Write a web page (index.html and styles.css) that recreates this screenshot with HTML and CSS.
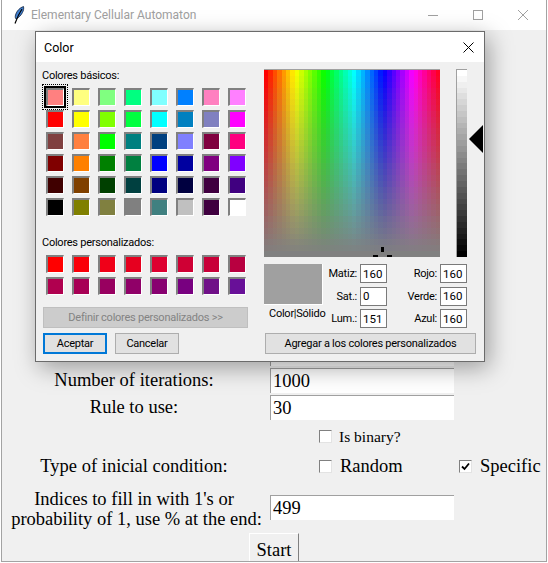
FILE: index.html
```html
<!DOCTYPE html>
<html lang="es">
<head>
    <meta charset="UTF-8">
    <meta name="viewport" content="width=device-width, initial-scale=1.0">
    <title>Elementary Cellular Automaton</title>
    <link rel="stylesheet" href="styles.css">
</head>
<body>
    <div class="window">
        <div class="titlebar">
            <svg class="feather" width="12" height="18" viewBox="0 0 12 18">
                <path d="M10.5 .5C7 1.5 3.5 5 2.5 9c-.4 1.6-.3 3 .3 3.8C5.500 12 8 9.500 9.500 6.500 10.500 4.500 11 2.500 10.500 .5z" fill="#3f7fd0" stroke="#12233d" stroke-width=".8"/>
                <path d="M9 3C7 6 4.500 10.500 2 17.500" fill="none" stroke="#000" stroke-width="1.200"/>
            </svg>
            <span class="app-title">Elementary Cellular Automaton</span>
            <div class="win-controls">
                <svg width="10" height="10" viewBox="0 0 10 10"><path d="M0 5.500H10" stroke="#a0a0a0"/></svg>
                <svg width="10" height="10" viewBox="0 0 10 10"><rect x=".5" y=".5" width="9" height="9" fill="none" stroke="#a0a0a0"/></svg>
                <svg width="10" height="10" viewBox="0 0 10 10"><path d="M0 0L10 10M10 0L0 10" stroke="#a0a0a0"/></svg>
            </div>
        </div>

        <form class="form">
            <div class="row-label covered"></div>
            <input class="field" type="text">
            <span></span>

            <label class="row-label">Number of iterations:</label>
            <input class="field" type="text" value="1000">
            <span></span>

            <label class="row-label">Rule to use:</label>
            <input class="field" type="text" value="30">
            <span></span>

            <span></span>
            <div class="check small"><span class="box"></span>Is binary?</div>
            <span></span>

            <label class="row-label type-label">Type of inicial condition:</label>
            <div class="check"><span class="box"></span>Random</div>
            <div class="check right"><span class="box on"><svg width="9" height="9" viewBox="0 0 9 9"><path d="M1 4.500L3.500 7 8 1.500" fill="none" stroke="#000" stroke-width="1.800"/></svg></span>Specific</div>

            <label class="row-label two-lines">Indices to fill in with 1's or<br><span class="nudge">probability of 1, use % at the end:</span></label>
            <input class="field indices" type="text" value="499">
            <span></span>

            <span></span>
            <div class="start-cell"><button type="button" class="start">Start</button></div>
            <span></span>
        </form>

        <div class="dialog">
            <div class="dialog-title">
                <span>Color</span>
                <svg width="11" height="11" viewBox="0 0 11 11"><path d="M.5 .5L10.500 10.500M10.500 .5L.5 10.500" stroke="#000" stroke-width="1"/></svg>
            </div>
            <div class="dialog-body">
                <div class="left-col">
                    <div class="sw-label">Colores básicos:</div>
                    <div class="swatches">
                        <span class="sw picked c-ff8080"></span><span class="sw c-ffff80"></span><span class="sw c-80ff80"></span><span class="sw c-00ff80"></span><span class="sw c-80ffff"></span><span class="sw c-0080ff"></span><span class="sw c-ff80c0"></span><span class="sw c-ff80ff"></span>
                        <span class="sw c-ff0000"></span><span class="sw c-ffff00"></span><span class="sw c-80ff00"></span><span class="sw c-00ff40"></span><span class="sw c-00ffff"></span><span class="sw c-0080c0"></span><span class="sw c-8080c0"></span><span class="sw c-ff00ff"></span>
                        <span class="sw c-804040"></span><span class="sw c-ff8040"></span><span class="sw c-00ff00"></span><span class="sw c-008080"></span><span class="sw c-004080"></span><span class="sw c-8080ff"></span><span class="sw c-800040"></span><span class="sw c-ff0080"></span>
                        <span class="sw c-800000"></span><span class="sw c-ff8000"></span><span class="sw c-008000"></span><span class="sw c-008040"></span><span class="sw c-0000ff"></span><span class="sw c-0000a0"></span><span class="sw c-800080"></span><span class="sw c-8000ff"></span>
                        <span class="sw c-400000"></span><span class="sw c-804000"></span><span class="sw c-004000"></span><span class="sw c-004040"></span><span class="sw c-000080"></span><span class="sw c-000040"></span><span class="sw c-400040"></span><span class="sw c-400080"></span>
                        <span class="sw c-000000"></span><span class="sw c-808000"></span><span class="sw c-808040"></span><span class="sw c-808080"></span><span class="sw c-408080"></span><span class="sw c-c0c0c0"></span><span class="sw c-400040"></span><span class="sw c-ffffff"></span>
                    </div>
                    <div class="sw-label custom-label">Colores personalizados:</div>
                    <div class="swatches">
                        <span class="sw c-ff0000"></span><span class="sw c-fa0008"></span><span class="sw c-f00018"></span><span class="sw c-e6001f"></span><span class="sw c-de0030"></span><span class="sw c-cf0034"></span><span class="sw c-c80038"></span><span class="sw c-b80040"></span>
                        <span class="sw c-b0004f"></span><span class="sw c-a80055"></span><span class="sw c-980060"></span><span class="sw c-900068"></span><span class="sw c-880070"></span><span class="sw c-780080"></span><span class="sw c-701088"></span><span class="sw c-681098"></span>
                    </div>
                    <button type="button" class="btn wide" disabled>Definir colores personalizados &gt;&gt;</button>
                    <div class="btn-row">
                        <button type="button" class="btn default">Aceptar</button>
                        <button type="button" class="btn">Cancelar</button>
                    </div>
                </div>

                <div class="right-col">
                    <div class="pick-row">
                        <div class="spectrum">
                            <span class="cross-v"></span>
                            <span class="cross-l"></span>
                            <span class="cross-r"></span>
                        </div>
                        <div class="lum-bar"></div>
                        <div class="arrow"></div>
                    </div>
                    <div class="value-row">
                        <div class="solid-col">
                            <div class="solid"></div>
                            <div class="solid-label">Color|Sólido</div>
                        </div>
                        <div class="values">
                            <span class="v-label">Matiz:</span><input class="v-input" value="160"><span class="v-label">Rojo:</span><input class="v-input" value="160">
                            <span class="v-label">Sat.:</span><input class="v-input" value="0"><span class="v-label">Verde:</span><input class="v-input" value="160">
                            <span class="v-label">Lum.:</span><input class="v-input" value="151"><span class="v-label">Azul:</span><input class="v-input" value="160">
                        </div>
                    </div>
                    <button type="button" class="btn add">Agregar a los colores personalizados</button>
                </div>
            </div>
        </div>
    </div>
</body>
</html>
```

FILE: styles.css
```css
html, body {
    margin: 0;
    padding: 0;
    background: #fff;
    overflow: hidden;
}
.window {
    position: relative;
    box-sizing: border-box;
    width: 546px;
    height: 562px;
    margin-left: 1px;
    background: #f0f0f0;
    border: 1px solid #a3a3a3;
    border-top: none;
    overflow: hidden;
}

/* main window */
.titlebar {
    display: flex;
    align-items: center;
    height: 30px;
    padding-left: 11px;
    background: #fff;
    font-family: Roboto, sans-serif;
    font-size: 12px;
}
.feather {
    margin-right: 6px;
}
.app-title {
    color: #a0a0a0;
}
.win-controls {
    display: flex;
    gap: 35px;
    margin-left: auto;
    margin-right: 18px;
}
.form {
    display: grid;
    grid-template-columns: 262px 184px 1fr;
    column-gap: 5px;
    padding: 311px 0 0 1px;
    font-family: "Liberation Serif", serif;
    font-size: 18.5px;
    color: #000;
}
.row-label {
    display: flex;
    justify-content: center;
    align-items: center;
    box-sizing: border-box;
    height: 27px;
    padding-bottom: 2px;
}
.covered {
    position: relative;
}
/* tail of a letter showing under the dialog */
.covered::after {
    content: "";
    position: absolute;
    left: 102px;
    top: 19px;
    width: 5px;
    height: 2px;
    background: #222;
}
.type-label {
    padding-bottom: 0;
    margin-bottom: 2px;
}
.row-label.two-lines {
    display: block;
    height: auto;
    padding-bottom: 0;
    text-align: center;
    line-height: 20px;
    margin-top: 7px;
}
.nudge {
    padding-left: 5px;
}
.field {
    box-sizing: border-box;
    width: 184px;
    height: 25px;
    margin-bottom: 2px;
    padding: 0 0 0 2px;
    border: none;
    border-top: 1px solid #a0a0a0;
    border-left: 1px solid #a0a0a0;
    background: #fff;
    font: 18.5px "Liberation Serif", serif;
    color: #000;
    outline: none;
}
.field.indices {
    margin-top: 13px;
}
.check {
    display: flex;
    align-items: center;
    height: 27px;
    margin-bottom: 2px;
    padding-left: 49px;
    white-space: nowrap;
}
.check.small {
    height: 31px;
    margin-bottom: 0;
    padding-bottom: 2px;
    box-sizing: border-box;
    font-size: 15.5px;
}
.check.right {
    padding-left: 0;
}
.box {
    display: flex;
    align-items: center;
    justify-content: center;
    box-sizing: border-box;
    width: 13px;
    height: 13px;
    margin-right: 7px;
    background: #fff;
    border-top: 1px solid #808080;
    border-left: 1px solid #808080;
    border-right: 1px solid #e3e3e3;
    border-bottom: 1px solid #e3e3e3;
}
.check:not(.small) .box {
    margin-right: 8px;
}
.start-cell {
    margin-left: -21px;
    margin-top: 4px;
}
.start {
    box-sizing: border-box;
    width: 50px;
    height: 33px;
    padding: 0;
    background: #f0f0f0;
    border: none;
    border-top: 1px solid #fff;
    border-left: 1px solid #fff;
    border-right: 1px solid #808080;
    font: 18.5px "Liberation Serif", serif;
    color: #000;
}

/* color dialog */
.dialog {
    position: absolute;
    left: 33px;
    top: 31px;
    box-sizing: border-box;
    width: 450px;
    height: 331px;
    background: #f0f0f0;
    border: 1px solid #6b6b6b;
    box-shadow: 4px 6px 22px rgba(0,0,0,0.35);
    font-family: Roboto, sans-serif;
    font-size: 11px;
    letter-spacing: -.25px;
    color: #000;
}
.dialog-title {
    display: flex;
    justify-content: space-between;
    align-items: center;
    height: 30px;
    padding: 0 10px 0 8px;
    background: #fff;
    font-size: 12.5px;
    letter-spacing: 0;
}
.dialog-body {
    display: flex;
}
.left-col {
    box-sizing: border-box;
    width: 228px;
    padding: 7px 0 0 6px;
}
.sw-label {
    height: 14px;
    line-height: 14px;
}
.custom-label {
    margin-top: 20px;
}
.swatches {
    display: grid;
    grid-template-columns: repeat(8, 18px);
    grid-auto-rows: 18px;
    column-gap: 8px;
    row-gap: 4px;
    margin: 5px 0 0 4px;
}
.custom-label + .swatches {
    margin-top: 5px;
}
.sw {
    position: relative;
    box-sizing: border-box;
    border-top: 2px solid #808080;
    border-left: 2px solid #808080;
    border-right: 1px solid #fff;
    border-bottom: 1px solid #fff;
}
.sw.picked {
    outline: 2px solid #000;
    outline-offset: 0;
}
.sw.picked::after {
    content: "";
    position: absolute;
    left: -6px;
    top: -6px;
    right: -5px;
    bottom: -5px;
    border: 1px dotted #000;
}
.btn {
    box-sizing: border-box;
    height: 21px;
    padding: 0;
    background: #e1e1e1;
    border: 1px solid #adadad;
    font-family: Roboto, sans-serif;
    font-size: 11px;
    letter-spacing: -.25px;
    color: #000;
}
.btn.wide {
    display: block;
    width: 205px;
    margin: 12px 0 0 1px;
    background: #cccccc;
    border-color: #bfbfbf;
    color: #838383;
}
.btn-row {
    display: flex;
    gap: 8px;
    margin: 5px 0 0 1px;
}
.btn-row .btn {
    width: 64px;
}
.btn.default {
    border: 2px solid #0078d7;
}
.right-col {
    display: flex;
    flex-direction: column;
    padding-top: 7px;
}
.pick-row {
    display: flex;
    height: 188px;
}
.spectrum {
    position: relative;
    width: 176px;
    height: 188px;
    background:
        linear-gradient(to bottom,
            rgba(128,128,128,0) 0 3.125%, rgba(128,128,128,.03) 0 6.25%, rgba(128,128,128,.06) 0 9.375%, rgba(128,128,128,.1) 0 12.5%,
            rgba(128,128,128,.13) 0 15.625%, rgba(128,128,128,.16) 0 18.75%, rgba(128,128,128,.19) 0 21.875%, rgba(128,128,128,.23) 0 25%,
            rgba(128,128,128,.26) 0 28.125%, rgba(128,128,128,.29) 0 31.25%, rgba(128,128,128,.32) 0 34.375%, rgba(128,128,128,.35) 0 37.5%,
            rgba(128,128,128,.39) 0 40.625%, rgba(128,128,128,.42) 0 43.75%, rgba(128,128,128,.45) 0 46.875%, rgba(128,128,128,.48) 0 50%,
            rgba(128,128,128,.52) 0 53.125%, rgba(128,128,128,.55) 0 56.25%, rgba(128,128,128,.58) 0 59.375%, rgba(128,128,128,.61) 0 62.5%,
            rgba(128,128,128,.65) 0 65.625%, rgba(128,128,128,.68) 0 68.75%, rgba(128,128,128,.71) 0 71.875%, rgba(128,128,128,.74) 0 75%,
            rgba(128,128,128,.77) 0 78.125%, rgba(128,128,128,.81) 0 81.25%, rgba(128,128,128,.84) 0 84.375%, rgba(128,128,128,.87) 0 87.5%,
            rgba(128,128,128,.9) 0 90.625%, rgba(128,128,128,.94) 0 93.75%, rgba(128,128,128,.97) 0 96.875%, #808080 0 100%),
        linear-gradient(to right,
            #ff0000 0 2.5%, #ff2600 0 5%, #ff4d00 0 7.5%, #ff7300 0 10%, #ff9900 0 12.5%, #ffbf00 0 15%, #ffe600 0 17.5%,
            #f2ff00 0 20%, #ccff00 0 22.5%, #a6ff00 0 25%, #80ff00 0 27.5%, #59ff00 0 30%, #33ff00 0 32.5%, #0dff00 0 35%,
            #00ff1a 0 37.5%, #00ff40 0 40%, #00ff66 0 42.5%, #00ff8c 0 45%, #00ffb3 0 47.5%, #00ffd9 0 50%, #00ffff 0 52.5%,
            #00d9ff 0 55%, #00b3ff 0 57.5%, #008cff 0 60%, #0066ff 0 62.5%, #0040ff 0 65%, #001aff 0 67.5%,
            #0d00ff 0 70%, #3300ff 0 72.5%, #5900ff 0 75%, #8000ff 0 77.5%, #a600ff 0 80%, #cc00ff 0 82.5%, #f200ff 0 85%,
            #ff00e6 0 87.5%, #ff00bf 0 90%, #ff0099 0 92.5%, #ff0073 0 95%, #ff004d 0 97.5%, #ff0026 0 100%);
    border-top: 1px solid #a0a0a0;
    box-sizing: border-box;
}
.cross-v, .cross-l, .cross-r {
    position: absolute;
    background: #000;
}
.cross-v {
    left: 117px;
    top: 177px;
    width: 3px;
    height: 5px;
}
.cross-l {
    left: 109px;
    top: 185px;
    width: 5px;
    height: 2px;
}
.cross-r {
    left: 123px;
    top: 185px;
    width: 5px;
    height: 2px;
}
.lum-bar {
    box-sizing: border-box;
    width: 11px;
    height: 188px;
    margin-left: 16px;
    border-top: 1px solid #a0a0a0;
    border-left: 1px solid #a0a0a0;
    background: linear-gradient(to bottom,
        #ffffff 0 3.125%, #f7f7f7 0 6.25%, #efefef 0 9.375%, #e7e7e7 0 12.5%,
        #dedede 0 15.625%, #d6d6d6 0 18.75%, #cecece 0 21.875%, #c6c6c6 0 25%,
        #bebebe 0 28.125%, #b5b5b5 0 31.25%, #adadad 0 34.375%, #a5a5a5 0 37.5%,
        #9d9d9d 0 40.625%, #959595 0 43.75%, #8c8c8c 0 46.875%, #848484 0 50%,
        #7b7b7b 0 53.125%, #737373 0 56.25%, #6b6b6b 0 59.375%, #636363 0 62.5%,
        #5a5a5a 0 65.625%, #525252 0 68.75%, #4a4a4a 0 71.875%, #424242 0 75%,
        #3a3a3a 0 78.125%, #313131 0 81.25%, #292929 0 84.375%, #212121 0 87.5%,
        #191919 0 90.625%, #101010 0 93.75%, #080808 0 96.875%, #000000 0 100%);
}
.arrow {
    width: 0;
    height: 0;
    margin: 56px 0 0 2px;
    border-top: 14px solid transparent;
    border-bottom: 14px solid transparent;
    border-right: 14px solid #000;
}
.value-row {
    display: flex;
    margin-top: 7px;
}
.solid-col {
    width: 64px;
}
.solid {
    box-sizing: border-box;
    width: 59px;
    height: 41px;
    background: #a0a0a0;
    border-right: 1px solid #fff;
    border-bottom: 1px solid #fff;
}
.solid-label {
    margin: 2px 0 0 5px;
    line-height: 14px;
    white-space: nowrap;
}
.values {
    display: grid;
    grid-template-columns: 32px 27px 53px 27px;
    grid-auto-rows: 19px;
    column-gap: 0;
    row-gap: 3.5px;
}
.v-label {
    padding-right: 3px;
    text-align: right;
    line-height: 19px;
    white-space: nowrap;
}
.v-input {
    box-sizing: border-box;
    width: 27px;
    height: 19px;
    padding: 0 0 0 2px;
    border: 1px solid #7a7a7a;
    background: #fff;
    font-family: Roboto, sans-serif;
    font-size: 11.5px;
    color: #000;
    outline: none;
}
.btn.add {
    width: 211px;
    margin: 5px 0 0 1px;
}

/* swatch colours */
.c-ff8080 { background: #ff8080; }
.c-ffff80 { background: #ffff80; }
.c-80ff80 { background: #80ff80; }
.c-00ff80 { background: #00ff80; }
.c-80ffff { background: #80ffff; }
.c-0080ff { background: #0080ff; }
.c-ff80c0 { background: #ff80c0; }
.c-ff80ff { background: #ff80ff; }
.c-ff0000 { background: #ff0000; }
.c-ffff00 { background: #ffff00; }
.c-80ff00 { background: #80ff00; }
.c-00ff40 { background: #00ff40; }
.c-00ffff { background: #00ffff; }
.c-0080c0 { background: #0080c0; }
.c-8080c0 { background: #8080c0; }
.c-ff00ff { background: #ff00ff; }
.c-804040 { background: #804040; }
.c-ff8040 { background: #ff8040; }
.c-00ff00 { background: #00ff00; }
.c-008080 { background: #008080; }
.c-004080 { background: #004080; }
.c-8080ff { background: #8080ff; }
.c-800040 { background: #800040; }
.c-ff0080 { background: #ff0080; }
.c-800000 { background: #800000; }
.c-ff8000 { background: #ff8000; }
.c-008000 { background: #008000; }
.c-008040 { background: #008040; }
.c-0000ff { background: #0000ff; }
.c-0000a0 { background: #0000a0; }
.c-800080 { background: #800080; }
.c-8000ff { background: #8000ff; }
.c-400000 { background: #400000; }
.c-804000 { background: #804000; }
.c-004000 { background: #004000; }
.c-004040 { background: #004040; }
.c-000080 { background: #000080; }
.c-000040 { background: #000040; }
.c-400040 { background: #400040; }
.c-400080 { background: #400080; }
.c-000000 { background: #000000; }
.c-808000 { background: #808000; }
.c-808040 { background: #808040; }
.c-808080 { background: #808080; }
.c-408080 { background: #408080; }
.c-c0c0c0 { background: #c0c0c0; }
.c-ffffff { background: #ffffff; }
.c-fa0008 { background: #fa0008; }
.c-f00018 { background: #f00018; }
.c-e6001f { background: #e6001f; }
.c-de0030 { background: #de0030; }
.c-cf0034 { background: #cf0034; }
.c-c80038 { background: #c80038; }
.c-b80040 { background: #b80040; }
.c-b0004f { background: #b0004f; }
.c-a80055 { background: #a80055; }
.c-980060 { background: #980060; }
.c-900068 { background: #900068; }
.c-880070 { background: #880070; }
.c-780080 { background: #780080; }
.c-701088 { background: #701088; }
.c-681098 { background: #681098; }
```
